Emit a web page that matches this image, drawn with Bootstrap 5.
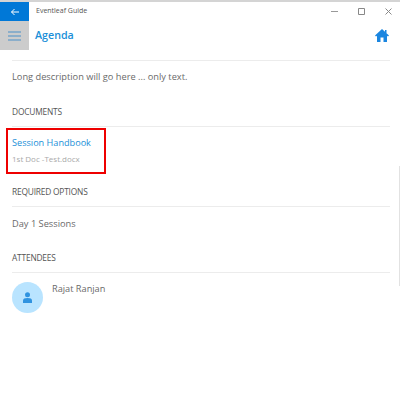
<!DOCTYPE html>
<html lang="en">
<head>
  <meta charset="UTF-8">
  <meta name="viewport" content="width=device-width, initial-scale=1.0">
  <title>Eventleaf Guide</title>
  <link href="https://cdn.jsdelivr.net/npm/bootstrap@5.3.0/dist/css/bootstrap.min.css" rel="stylesheet">
  <style>
    body {
      font-family: "Open Sans", "Noto Sans", sans-serif;
      background-color: #fff;
      color: #6a6a6a;
      width: 400px;
      height: 400px;
      overflow: hidden;
    }
    .app-top {
      height: 2px;
      background-color: #d4d4d4;
    }
    .side-col {
      width: 29px;
    }
    .back-tile {
      height: 19px;
      background-color: #0078d7;
    }
    .menu-tile {
      height: 29px;
      background-color: #cccccc;
    }
    .title-row {
      height: 19px;
    }
    .title-text {
      font-size: 7px;
      color: #555;
      padding-left: 7px;
    }
    .win-btns {
      gap: 20px;
      padding-right: 8px;
    }
    .head-row {
      height: 29px;
      padding-left: 6px;
      padding-right: 11px;
    }
    .page-title {
      font-size: 10.7px;
      font-weight: 600;
      color: #1b8fd8;
      margin: 0;
    }
    .page-body {
      padding: 0 10px 0 12px;
    }
    .rule {
      height: 1px;
      background-color: #ececec;
    }
    .rule-first {
      margin-top: 10px;
    }
    .desc-row {
      font-size: 9.25px;
      line-height: 32px;
      height: 36px;
    }
    .sect-label {
      font-size: 8.4px;
      color: #555;
      letter-spacing: -0.2px;
      line-height: 29px;
      height: 29px;
    }
    .doc-block {
      height: 50px;
      padding-top: 9px;
    }
    .doc-name {
      font-size: 9.15px;
      line-height: 14px;
      color: #1b8fd8;
      margin-bottom: 2px;
    }
    .doc-file {
      font-size: 8px;
      line-height: 14px;
      color: #aaa;
    }
    .red-box {
      position: absolute;
      left: 6px;
      top: 128px;
      width: 100px;
      height: 46px;
      border: 2px solid #ee0000;
    }
    .opt-row {
      font-size: 9.25px;
      line-height: 14px;
      height: 36px;
      padding-top: 10px;
    }
    .person-row {
      padding-top: 9px;
      gap: 9px;
    }
    .avatar-disc {
      width: 31px;
      height: 31px;
      border-radius: 50%;
      background-color: #b9e4ff;
    }
    .person-name {
      font-size: 9.2px;
      line-height: 14px;
    }
    .scroll-line {
      position: absolute;
      right: 0;
      top: 166px;
      width: 1px;
      height: 120px;
      background-color: #e2e2e2;
    }
  </style>
</head>
<body>
  <div class="app-top"></div>
  <div class="d-flex">
    <div class="side-col flex-shrink-0">
      <div class="back-tile d-flex align-items-center justify-content-center">
        <svg width="10" height="10" viewBox="0 0 10 10" fill="none" stroke="#fff" stroke-width="1"><path d="M9 5H1.500M4.500 2 1.500 5l3 3"/></svg>
      </div>
      <div class="menu-tile d-flex align-items-center justify-content-center">
        <svg width="13" height="10" viewBox="0 0 13 10" stroke="#4a90c8" stroke-width="1.2"><path d="M0 1h13M0 5h13M0 9h13"/></svg>
      </div>
    </div>
    <div class="flex-grow-1">
      <div class="title-row d-flex align-items-center justify-content-between">
        <span class="title-text">Eventleaf Guide</span>
        <div class="win-btns d-flex align-items-center">
          <svg width="7" height="7" viewBox="0 0 7 7" stroke="#999"><path d="M0 3.500h7"/></svg>
          <svg width="7" height="7" viewBox="0 0 7 7" fill="none" stroke="#888"><path d="M.5.5h6v6h-6z"/></svg>
          <svg width="7" height="7" viewBox="0 0 7 7" stroke="#888"><path d="M.5.5l6 6M6.500.5l-6 6"/></svg>
        </div>
      </div>
      <div class="head-row d-flex align-items-center justify-content-between">
        <h1 class="page-title">Agenda</h1>
        <svg width="14" height="13" viewBox="0 0 14 13" fill="#1b86e0"><path d="M7 0 0 6.500 1 7.500 2 6.700V13H5.500V8.500H8.500V13H12V6.700L13 7.500 14 6.500 11.500 4.200V1H10V2.800Z"/></svg>
      </div>
    </div>
  </div>
  <div class="page-body">
    <div class="rule rule-first"></div>
    <div class="desc-row">Long description will go here ... only text.</div>
    <div class="sect-label">DOCUMENTS</div>
    <div class="rule"></div>
    <div class="doc-block">
      <div class="doc-name">Session Handbook</div>
      <div class="doc-file">1st Doc -Test.docx</div>
    </div>
    <div class="sect-label">REQUIRED OPTIONS</div>
    <div class="rule"></div>
    <div class="opt-row">Day 1 Sessions</div>
    <div class="sect-label">ATTENDEES</div>
    <div class="rule"></div>
    <div class="person-row d-flex">
      <div class="avatar-disc d-flex align-items-center justify-content-center">
        <svg width="9" height="11" viewBox="0 0 9 11" fill="#2f93e0"><circle cx="4.500" cy="2.800" r="2.500"/><path d="M0 11V8.500C0 6.800 1.500 6 4.500 6S9 6.800 9 8.500V11Z"/></svg>
      </div>
      <div class="person-name">Rajat Ranjan</div>
    </div>
  </div>
  <div class="red-box"></div>
  <div class="scroll-line"></div>
  <script src="https://cdn.jsdelivr.net/npm/bootstrap@5.3.0/dist/js/bootstrap.bundle.min.js"></script>
</body>
</html>
